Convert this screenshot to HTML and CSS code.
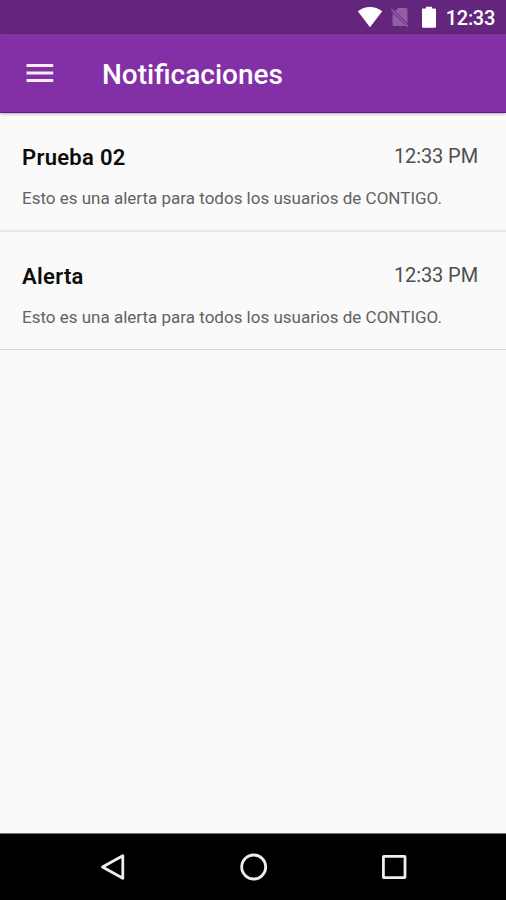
FILE: index.html
```
<!DOCTYPE html>
<html lang="es">
<head>
    <meta charset="UTF-8">
    <meta name="viewport" content="width=device-width, initial-scale=1.0">
    <title>Notificaciones</title>
    <link rel="stylesheet" href="styles.css">
</head>
<body>
    <div class="status-bar">
        <svg class="wifi" width="26" height="22" viewBox="0 0 26 22">
            <path d="M0.8 5.2 C8 -0.5 18 -0.5 25.2 5.2 L13 21.2 Z" fill="#fff"/>
        </svg>
        <svg class="sim" width="20" height="22" viewBox="0 0 20 22">
            <path d="M8 2 H16 Q17.5 2 17.5 3.5 V17.4 L5.1 4.9 Z M2.6 6.7 L16 20.1 H4 Q2.6 20.1 2.6 18.5 Z" fill="#915fa5"/>
            <path d="M1.2 3 L18.2 20.8" stroke="#915fa5" stroke-width="1.6"/>
        </svg>
        <svg class="battery" width="16" height="22" viewBox="0 0 16 22">
            <path d="M5 0.7 H11 V2.5 H14 Q15 2.5 15 3.5 V20.8 Q15 21.8 14 21.8 H2 Q1 21.8 1 20.8 V3.5 Q1 2.5 2 2.5 H5 Z" fill="#fff"/>
        </svg>
        <span class="clock">12:33</span>
    </div>

    <div class="toolbar">
        <svg class="menu" width="28" height="22" viewBox="0 0 28 22">
            <path d="M0.5 3.5 H27.2 M0.5 11 H27.2 M0.5 18.6 H27.2" stroke="#f7edfa" stroke-width="3"/>
        </svg>
        <h1>Notificaciones</h1>
    </div>

    <div class="list">
        <div class="item">
            <div class="item-header">
                <h2>Prueba 02</h2>
                <span class="time">12:33 PM</span>
            </div>
            <p>Esto es una alerta para todos los usuarios de CONTIGO.</p>
        </div>
        <div class="item">
            <div class="item-header">
                <h2>Alerta</h2>
                <span class="time">12:33 PM</span>
            </div>
            <p>Esto es una alerta para todos los usuarios de CONTIGO.</p>
        </div>
    </div>

    <div class="nav-bar">
        <svg width="30" height="30" viewBox="0 0 30 30">
            <path d="M4.5 15 L24.8 3.7 V26.3 Z"/>
        </svg>
        <svg width="30" height="30" viewBox="0 0 30 30">
            <circle cx="14.7" cy="15" r="12"/>
        </svg>
        <svg width="30" height="30" viewBox="0 0 30 30">
            <rect x="4.4" y="4.4" width="21.6" height="21.2" rx="0.5"/>
        </svg>
    </div>
</body>
</html>
```
FILE: styles.css
```
body {
    font-family: Roboto, sans-serif;
    margin: 0;
    height: 900px;
    display: flex;
    flex-direction: column;
    background-color: #fafafa;
    overflow: hidden;
}
.status-bar {
    height: 34px;
    flex-shrink: 0;
    box-sizing: border-box;
    padding: 0 11px 0 0;
    display: flex;
    justify-content: flex-end;
    align-items: center;
    background-color: #64257c;
    color: #fff;
}
.sim {
    margin-left: 7px;
}
.battery {
    margin-left: 11px;
}
.clock {
    margin-left: 9px;
    font-size: 20px;
    font-weight: 500;
    letter-spacing: -0.3px;
    line-height: 34px;
    padding-top: 2px;
}
.toolbar {
    height: 79px;
    flex-shrink: 0;
    box-sizing: border-box;
    padding-left: 26px;
    display: flex;
    align-items: center;
    background-color: #832fa5;
    border-bottom: 1px solid #700c94;
    box-shadow: 0 1px 3px rgba(0, 0, 0, 0.3);
}
.toolbar h1 {
    margin: 2px 0 0 48px;
    color: #fff;
    font-size: 28px;
    font-weight: 500;
}
.list {
    flex: 1;
}
.item {
    height: 119px;
    box-sizing: border-box;
    padding: 32px 28px 0 22px;
    border-bottom: 2px solid #e6e6e6;
}
.item:last-child {
    height: 118px;
    border-bottom: 1px solid #d6d6d6;
}
.item-header {
    display: flex;
    justify-content: space-between;
    height: 26px;
    line-height: 26px;
}
.item h2 {
    margin: 0;
    color: #0c0c0c;
    font-size: 22px;
    font-weight: 600;
    letter-spacing: 0.3px;
}
.time {
    color: #505050;
    font-size: 20px;
    letter-spacing: -0.1px;
    line-height: 22px;
}
.item p {
    margin: 16px 0 0;
    color: #626262;
    font-size: 17px;
    line-height: 22px;
    white-space: nowrap;
}
.nav-bar {
    height: 67px;
    flex-shrink: 0;
    box-sizing: border-box;
    padding: 0 97px 0 98px;
    display: flex;
    justify-content: space-between;
    align-items: center;
    background-color: #000;
    border-top: 1px solid #777;
}
.nav-bar svg {
    fill: none;
    stroke: #eee;
    stroke-width: 2.8;
    stroke-linejoin: round;
}
```
